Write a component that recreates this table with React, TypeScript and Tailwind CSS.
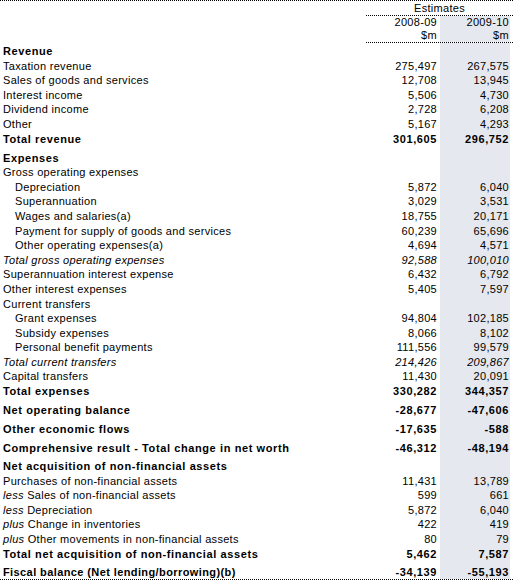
type Row = {
  label: string
  a?: string
  b?: string
  kind?: 'bold' | 'italic' | 'sub' | 'plain'
  prefix?: string
  tight?: boolean
  h: number
}

const R = 14.6

const rows: Row[] = [
  { label: 'Revenue', kind: 'bold', h: 15 },
  { label: 'Taxation revenue', a: '275,497', b: '267,575', h: R },
  { label: 'Sales of goods and services', a: '12,708', b: '13,945', h: R },
  { label: 'Interest income', a: '5,506', b: '4,730', h: R },
  { label: 'Dividend income', a: '2,728', b: '6,208', h: R },
  { label: 'Other', a: '5,167', b: '4,293', h: R },
  { label: 'Total revenue', a: '301,605', b: '296,752', kind: 'bold', h: R },
  { label: 'Expenses', kind: 'bold', h: 19 },
  { label: 'Gross operating expenses', h: R },
  { label: 'Depreciation', a: '5,872', b: '6,040', kind: 'sub', h: R },
  { label: 'Superannuation', a: '3,029', b: '3,531', kind: 'sub', h: R },
  { label: 'Wages and salaries(a)', a: '18,755', b: '20,171', kind: 'sub', h: R },
  { label: 'Payment for supply of goods and services', a: '60,239', b: '65,696', kind: 'sub', h: R },
  { label: 'Other operating expenses(a)', a: '4,694', b: '4,571', kind: 'sub', h: R },
  { label: 'Total gross operating expenses', a: '92,588', b: '100,010', kind: 'italic', h: R },
  { label: 'Superannuation interest expense', a: '6,432', b: '6,792', h: R },
  { label: 'Other interest expenses', a: '5,405', b: '7,597', h: R },
  { label: 'Current transfers', h: R },
  { label: 'Grant expenses', a: '94,804', b: '102,185', kind: 'sub', h: R },
  { label: 'Subsidy expenses', a: '8,066', b: '8,102', kind: 'sub', h: R },
  { label: 'Personal benefit payments', a: '111,556', b: '99,579', kind: 'sub', h: R },
  { label: 'Total current transfers', a: '214,426', b: '209,867', kind: 'italic', h: R },
  { label: 'Capital transfers', a: '11,430', b: '20,091', h: R },
  { label: 'Total expenses', a: '330,282', b: '344,357', kind: 'bold', h: R },
  { label: 'Net operating balance', a: '-28,677', b: '-47,606', kind: 'bold', h: 19 },
  { label: 'Other economic flows', a: '-17,635', b: '-588', kind: 'bold', h: 19 },
  { label: 'Comprehensive result - Total change in net worth', a: '-46,312', b: '-48,194', kind: 'bold', h: 19 },
  { label: 'Net acquisition of non-financial assets', kind: 'bold', h: 18 },
  { label: 'Purchases of non-financial assets', a: '11,431', b: '13,789', h: R },
  { label: 'Sales of non-financial assets', prefix: 'less', a: '599', b: '661', h: R },
  { label: 'Depreciation', prefix: 'less', a: '5,872', b: '6,040', h: R },
  { label: 'Change in inventories', prefix: 'plus', a: '422', b: '419', h: R },
  { label: 'Other movements in non-financial assets', prefix: 'plus', a: '80', b: '79', h: R },
  { label: 'Total net acquisition of non-financial assets', a: '5,462', b: '7,587', kind: 'bold', h: R },
  { label: 'Fiscal balance (Net lending/borrowing)(b)', a: '-34,139', b: '-55,193', kind: 'bold', tight: true, h: 18 },
]

function textClass(kind?: Row['kind']) {
  if (kind === 'bold') return 'font-bold tracking-[0.6px]'
  if (kind === 'italic') return 'italic tracking-[0.3px]'
  return 'tracking-[0.3px]'
}

function TableRow({ row }: { row: Row }) {
  const t = textClass(row.kind)
  return (
    <div className="flex" style={{ height: row.h }}>
      <div
        className={`w-[366px] flex items-end leading-[13px] ${row.kind === 'sub' ? 'pl-[15px]' : 'pl-[3px]'} ${t}`}
      >
        <span className={`whitespace-nowrap ${row.tight ? 'tracking-[0.4px]' : ''}`}>
          {row.prefix && <i>{row.prefix} </i>}
          {row.label}
        </span>
      </div>
      <div className={`w-[74px] flex items-end justify-end pr-[3px] leading-[13px] ${t}`}>{row.a}</div>
      <div className={`w-[70px] flex items-end justify-end pr-[1px] leading-[13px] bg-[#e5e8ee] ${t}`}>{row.b}</div>
      <div className="w-[3px]" />
    </div>
  )
}

export default function App() {
  return (
    <div className="w-[513px] h-[581px] bg-white text-black text-[11px] font-['Liberation_Sans',Arial,sans-serif]">
      <div className="border-t border-dotted border-black">
        {/* header */}
        <div className="flex h-[15px]">
          <div className="w-[366px]" />
          <div className="w-[147px] flex items-end justify-center leading-[13px] tracking-[0.3px] border-b border-dotted border-black">
            Estimates
          </div>
        </div>
        <div className="flex">
          <div className="w-[366px]" />
          <div className="w-[147px] border-b border-dotted border-black">
            <div className="flex h-[13px] tracking-[0.3px] leading-[13px]">
              <div className="w-[74px] text-right pr-[3px]">2008-09</div>
              <div className="w-[70px] text-right pr-[1px] bg-[#e5e8ee]">2009-10</div>
            </div>
            <div className="flex h-[13px] tracking-[0.3px] leading-[13px]">
              <div className="w-[74px] text-right pr-[3px]">$m</div>
              <div className="w-[70px] text-right pr-[1px] bg-[#e5e8ee]">$m</div>
            </div>
          </div>
        </div>
        <div className="border-b border-dotted border-black">
          {rows.map((r, i) => (
            <TableRow key={i} row={r} />
          ))}
        </div>
      </div>
    </div>
  )
}
